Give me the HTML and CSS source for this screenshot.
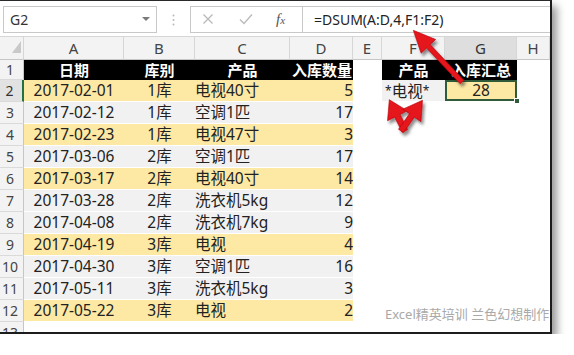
FILE: index.html
```html
<!DOCTYPE html>
<html lang="zh-CN">
<head>
    <meta charset="UTF-8">
    <title>DSUM 入库汇总</title>
    <link rel="stylesheet" href="styles.css">
</head>
<body>
    <div class="shot">
        <!-- 名称框 + 编辑栏 -->
        <div class="fbar">
            <div class="namebox">
                <span>G2</span>
                <span class="drop"></span>
            </div>
            <div class="grip">
                <svg width="3" height="12" viewBox="0 0 3 12">
                    <circle cx="1.5" cy="1.5" r="1" fill="#b8b8b8"/>
                    <circle cx="1.5" cy="6" r="1" fill="#b8b8b8"/>
                    <circle cx="1.5" cy="10.5" r="1" fill="#b8b8b8"/>
                </svg>
            </div>
            <div class="formula">
                <div class="fbtns">
                    <svg class="btn-x" width="12" height="12" viewBox="0 0 12 12">
                        <path d="M1.5 1.5L10.5 10.5M10.5 1.5L1.5 10.5" stroke="#b9b9b9" stroke-width="1.3"/>
                    </svg>
                    <svg class="btn-ok" width="14" height="12" viewBox="0 0 14 12">
                        <path d="M1 6.5L5 10.5L13 1.5" stroke="#b9b9b9" stroke-width="1.3" fill="none"/>
                    </svg>
                    <span class="fx"><i>f</i><small>x</small></span>
                </div>
                <div class="ftext">=DSUM(A:D,4,F1:F2)</div>
            </div>
        </div>

        <table class="sheet">
            <colgroup>
                <col class="c-row">
                <col class="c-a">
                <col class="c-b">
                <col class="c-c">
                <col class="c-d">
                <col class="c-e">
                <col class="c-f">
                <col class="c-g">
                <col class="c-h">
            </colgroup>
            <thead>
                <tr>
                    <th class="corner"><span class="tri"></span></th>
                    <th>A</th>
                    <th>B</th>
                    <th>C</th>
                    <th>D</th>
                    <th>E</th>
                    <th>F</th>
                    <th class="sel">G</th>
                    <th>H</th>
                </tr>
            </thead>
            <tbody>
                <tr class="hd">
                    <td class="rn">1</td>
                    <td class="blk">日期</td>
                    <td class="blk">库别</td>
                    <td class="blk">产品</td>
                    <td class="blk num">入库数量</td>
                    <td></td>
                    <td class="blk">产品</td>
                    <td class="blk">入库汇总</td>
                    <td></td>
                </tr>
                <tr class="y">
                    <td class="rn cur">2</td>
                    <td class="date">2017-02-01</td>
                    <td class="mid">1库</td>
                    <td class="name">电视40寸</td>
                    <td class="num">5</td>
                    <td class="off"></td>
                    <td class="crit"><small>*</small>电视<small>*</small></td>
                    <td class="total">28<span class="handle"></span></td>
                    <td class="off"></td>
                </tr>
                <tr class="g">
                    <td class="rn">3</td>
                    <td class="date">2017-02-12</td>
                    <td class="mid">1库</td>
                    <td class="name">空调1匹</td>
                    <td class="num">17</td>
                    <td class="off" colspan="4"></td>
                </tr>
                <tr class="y">
                    <td class="rn">4</td>
                    <td class="date">2017-02-23</td>
                    <td class="mid">1库</td>
                    <td class="name">电视47寸</td>
                    <td class="num">3</td>
                    <td class="off" colspan="4"></td>
                </tr>
                <tr class="g">
                    <td class="rn">5</td>
                    <td class="date">2017-03-06</td>
                    <td class="mid">2库</td>
                    <td class="name">空调1匹</td>
                    <td class="num">17</td>
                    <td class="off" colspan="4"></td>
                </tr>
                <tr class="y">
                    <td class="rn">6</td>
                    <td class="date">2017-03-17</td>
                    <td class="mid">2库</td>
                    <td class="name">电视40寸</td>
                    <td class="num">14</td>
                    <td class="off" colspan="4"></td>
                </tr>
                <tr class="g">
                    <td class="rn">7</td>
                    <td class="date">2017-03-28</td>
                    <td class="mid">2库</td>
                    <td class="name">洗衣机5kg</td>
                    <td class="num">12</td>
                    <td class="off" colspan="4"></td>
                </tr>
                <tr class="g">
                    <td class="rn">8</td>
                    <td class="date">2017-04-08</td>
                    <td class="mid">2库</td>
                    <td class="name">洗衣机7kg</td>
                    <td class="num">9</td>
                    <td class="off" colspan="4"></td>
                </tr>
                <tr class="y">
                    <td class="rn">9</td>
                    <td class="date">2017-04-19</td>
                    <td class="mid">3库</td>
                    <td class="name">电视</td>
                    <td class="num">4</td>
                    <td class="off" colspan="4"></td>
                </tr>
                <tr class="g">
                    <td class="rn">10</td>
                    <td class="date">2017-04-30</td>
                    <td class="mid">3库</td>
                    <td class="name">空调1匹</td>
                    <td class="num">16</td>
                    <td class="off" colspan="4"></td>
                </tr>
                <tr class="g">
                    <td class="rn">11</td>
                    <td class="date">2017-05-11</td>
                    <td class="mid">3库</td>
                    <td class="name">洗衣机5kg</td>
                    <td class="num">3</td>
                    <td class="off" colspan="4"></td>
                </tr>
                <tr class="y">
                    <td class="rn">12</td>
                    <td class="date">2017-05-22</td>
                    <td class="mid">3库</td>
                    <td class="name">电视</td>
                    <td class="num">2</td>
                    <td class="off" colspan="4"></td>
                </tr>
                <tr class="empty">
                    <td class="rn">13</td>
                    <td class="off" colspan="8"></td>
                </tr>
            </tbody>
        </table>

        <!-- 水印 -->
        <div class="mark">Excel精英培训 兰色幻想制作</div>

        <!-- 红色箭头 -->
        <svg class="arrows" width="550" height="331" viewBox="0 1 550 331">
            <defs>
                <filter id="shade" x="-30%" y="-30%" width="160%" height="160%">
                    <feDropShadow dx="2" dy="3" stdDeviation="1.6" flood-color="#000" flood-opacity="0.45"/>
                </filter>
            </defs>
            <g fill="#e5121b" stroke="#b80b12" stroke-width="0.6" filter="url(#shade)">
                <polygon transform="translate(462 82) rotate(-133.3)"
                         points="0,-2.5 49,-2.5 49,-10 71,0 49,10 49,2.5 0,2.5"/>
                <polygon transform="translate(405 131) rotate(-116.6)"
                         points="0,-3 17,-3 17,-11 35,0 17,11 17,3 0,3"/>
                <polygon transform="translate(401 131) rotate(-55)"
                         points="0,-3 19,-3 19,-11 37.5,0 19,11 19,3 0,3"/>
            </g>
        </svg>
    </div>
</body>
</html>
```

FILE: styles.css
```css
* {
    box-sizing: border-box;
}

body {
    margin: 0;
    background: #fff;
    font-family: "Noto Sans", "Noto Sans CJK SC", sans-serif;
    color: #222;
}

/* 截图外框 */
.shot {
    position: relative;
    width: 552px;
    height: 334px;
    border-top: 1px solid #2a2a2a;
    border-right: 2px solid #1c1c1c;
    border-bottom: 2px solid #1c1c1c;
    box-shadow: 5px 6px 8px rgba(0, 0, 0, 0.4);
    overflow: hidden;
    background: #fff;
}

/* 编辑栏 */
.fbar {
    height: 35px;
    display: flex;
    align-items: center;
    padding-top: 1px;
}

.namebox {
    margin-left: 3px;
    width: 154px;
    height: 27px;
    border: 1px solid #c8c8c8;
    display: flex;
    align-items: center;
    justify-content: space-between;
    padding: 0 6px 0 6px;
    font-size: 14px;
    color: #333;
}

.drop {
    width: 0;
    height: 0;
    border-left: 4px solid transparent;
    border-right: 4px solid transparent;
    border-top: 4px solid #7a7a7a;
}

.grip {
    width: 33px;
    display: flex;
    justify-content: center;
    padding-top: 1px;
}

.formula {
    flex: 1;
    height: 27px;
    display: flex;
    border: 1px solid #c8c8c8;
    border-right: none;
}

.fbtns {
    width: 111px;
    display: flex;
    align-items: center;
    padding-left: 11px;
}

.btn-x {
    margin-right: 25px;
}

.btn-ok {
    margin-right: 23px;
}

.fx {
    font-family: "Liberation Serif", serif;
    color: #555;
    font-size: 15px;
}

.fx small {
    font-size: 11px;
    font-style: italic;
}

.ftext {
    flex: 1;
    border-left: 1px solid #c8c8c8;
    padding-left: 11px;
    font-size: 14px;
    line-height: 25px;
    color: #222;
}

/* 工作表 */
.sheet {
    width: 550px;
    table-layout: fixed;
    border-collapse: separate;
    border-spacing: 0;
}

.c-row { width: 24px; }
.c-a { width: 100px; }
.c-b { width: 71px; }
.c-c { width: 95px; }
.c-d { width: 63px; }
.c-e { width: 29px; }
.c-f { width: 63px; }
.c-g { width: 72px; }
.c-h { width: 33px; }

.sheet th,
.sheet td {
    padding: 0;
    white-space: nowrap;
}

.sheet thead tr {
    height: 23px;
}

.sheet th {
    background: #f3f3f3;
    border-top: 1px solid #d6d6d6;
    border-right: 1px solid #d6d6d6;
    border-bottom: 1px solid #c6c6c6;
    font-weight: normal;
    font-size: 15px;
    line-height: 20px;
    color: #444;
    text-align: center;
}

.sheet th.sel {
    background: #dedede;
    color: #333;
}

.sheet th.corner {
    text-align: right;
    vertical-align: bottom;
    padding: 0 2px 2px 0;
}

.tri {
    display: inline-block;
    width: 9px;
    height: 12px;
    background: #c9c9c9;
    clip-path: polygon(100% 0, 100% 100%, 0 100%);
}

.sheet td {
    font-size: 15.5px;
    line-height: 19px;
    border-bottom: 1px solid #fff;
    vertical-align: middle;
}

.sheet tbody tr {
    height: 22px;
}

.sheet tr.hd {
    height: 20px;
}

/* 行号 */
.sheet td.rn {
    background: #f3f3f3;
    border-right: 1px solid #c6c6c6;
    border-bottom: 1px solid #dadada;
    font-size: 14px;
    color: #444;
    text-align: center;
    padding-right: 3px;
}

.sheet td.rn.cur {
    background: #e2e2e2;
    border-right: 2px solid #217346;
    color: #333;
}

/* 标题行 */
.sheet td.blk {
    background: #000;
    border-bottom-color: #000;
    color: #fff;
    font-weight: bold;
    font-size: 15px;
    line-height: 18px;
    text-align: center;
}

.sheet td.blk.num {
    text-align: right;
    padding-right: 1px;
}

/* 数据行 */
.y .date, .y .mid, .y .name, .y .num {
    background: #fde8a4;
}

.g .date, .g .mid, .g .name, .g .num {
    background: #f1f1f1;
}

.date {
    text-align: center;
    padding-left: 5px;
}

.mid {
    text-align: center;
}

.name {
    padding-left: 5px;
}

.num {
    text-align: right;
    padding-right: 3px;
}

.sheet td.crit {
    background: #f1f1f1;
    padding-left: 3px;
    font-size: 15.5px;
}

.crit small {
    font-size: 12px;
    vertical-align: 2px;
}

.sheet td.total {
    position: relative;
    background: #fde8a4;
    box-shadow: inset 0 0 0 2px #2f5b3a;
    text-align: center;
}

.handle {
    position: absolute;
    right: -3px;
    bottom: -3px;
    width: 6px;
    height: 6px;
    background: #2f5b3a;
    border: 1px solid #fff;
}

/* 水印 */
.mark {
    position: absolute;
    left: 385px;
    top: 303px;
    font-size: 13px;
    color: #a9a9a9;
    white-space: nowrap;
}

.arrows {
    position: absolute;
    left: 0;
    top: 0;
    pointer-events: none;
}
```
